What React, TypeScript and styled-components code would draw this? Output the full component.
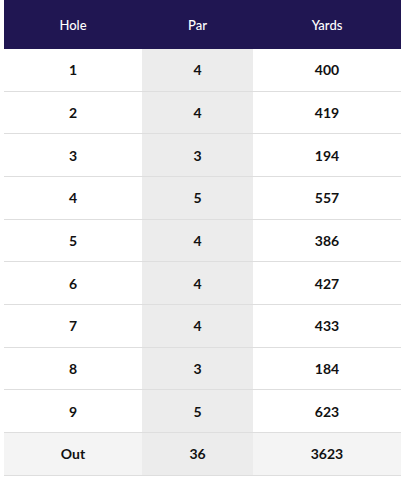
import * as React from 'react';
import styled, { createGlobalStyle } from 'styled-components';

const GlobalStyle = createGlobalStyle`
  html, body {
    margin: 0;
    padding: 0;
    background: #fff;
  }
  body {
    font-family: Lato, "Open Sans", Arial, sans-serif;
    overflow: hidden;
  }
`;

const Wrapper = styled.div`
  padding-left: 4px;
  width: 397px;
`;

const Table = styled.table`
  border-collapse: collapse;
  table-layout: fixed;
  width: 397px;
`;

const HeadCell = styled.th<{ $width: number }>`
  background-color: #201652;
  color: #fff;
  font-size: 13px;
  font-weight: 500;
  height: 49px;
  padding: 0;
  text-align: center;
  width: ${({ $width }) => $width}px;
`;

const Row = styled.tr<{ $total?: boolean }>`
  background-color: ${({ $total }) => ($total ? '#f4f4f4' : '#fff')};
`;

const Cell = styled.td<{ $shaded?: boolean }>`
  background-color: ${({ $shaded }) => ($shaded ? '#ececec' : 'transparent')};
  border-bottom: 1px solid #dedede;
  color: #111;
  font-size: 14px;
  font-weight: 700;
  height: 41.67px;
  padding: 0;
  text-align: center;
`;

const holes = [
  { hole: '1', par: 4, yards: 400 },
  { hole: '2', par: 4, yards: 419 },
  { hole: '3', par: 3, yards: 194 },
  { hole: '4', par: 5, yards: 557 },
  { hole: '5', par: 4, yards: 386 },
  { hole: '6', par: 4, yards: 427 },
  { hole: '7', par: 4, yards: 433 },
  { hole: '8', par: 3, yards: 184 },
  { hole: '9', par: 5, yards: 623 },
];

export const App: React.FC = () => {
  const totalPar = holes.reduce((sum, h) => sum + h.par, 0);
  const totalYards = holes.reduce((sum, h) => sum + h.yards, 0);

  return (
    <Wrapper>
      <GlobalStyle />
      <Table>
        <thead>
          <tr>
            <HeadCell $width={138}>Hole</HeadCell>
            <HeadCell $width={111}>Par</HeadCell>
            <HeadCell $width={148}>Yards</HeadCell>
          </tr>
        </thead>
        <tbody>
          {holes.map(h => (
            <Row key={h.hole}>
              <Cell>{h.hole}</Cell>
              <Cell $shaded>{h.par}</Cell>
              <Cell>{h.yards}</Cell>
            </Row>
          ))}
          <Row $total>
            <Cell>Out</Cell>
            <Cell $shaded>{totalPar}</Cell>
            <Cell>{totalYards}</Cell>
          </Row>
        </tbody>
      </Table>
    </Wrapper>
  );
};

export default App;
